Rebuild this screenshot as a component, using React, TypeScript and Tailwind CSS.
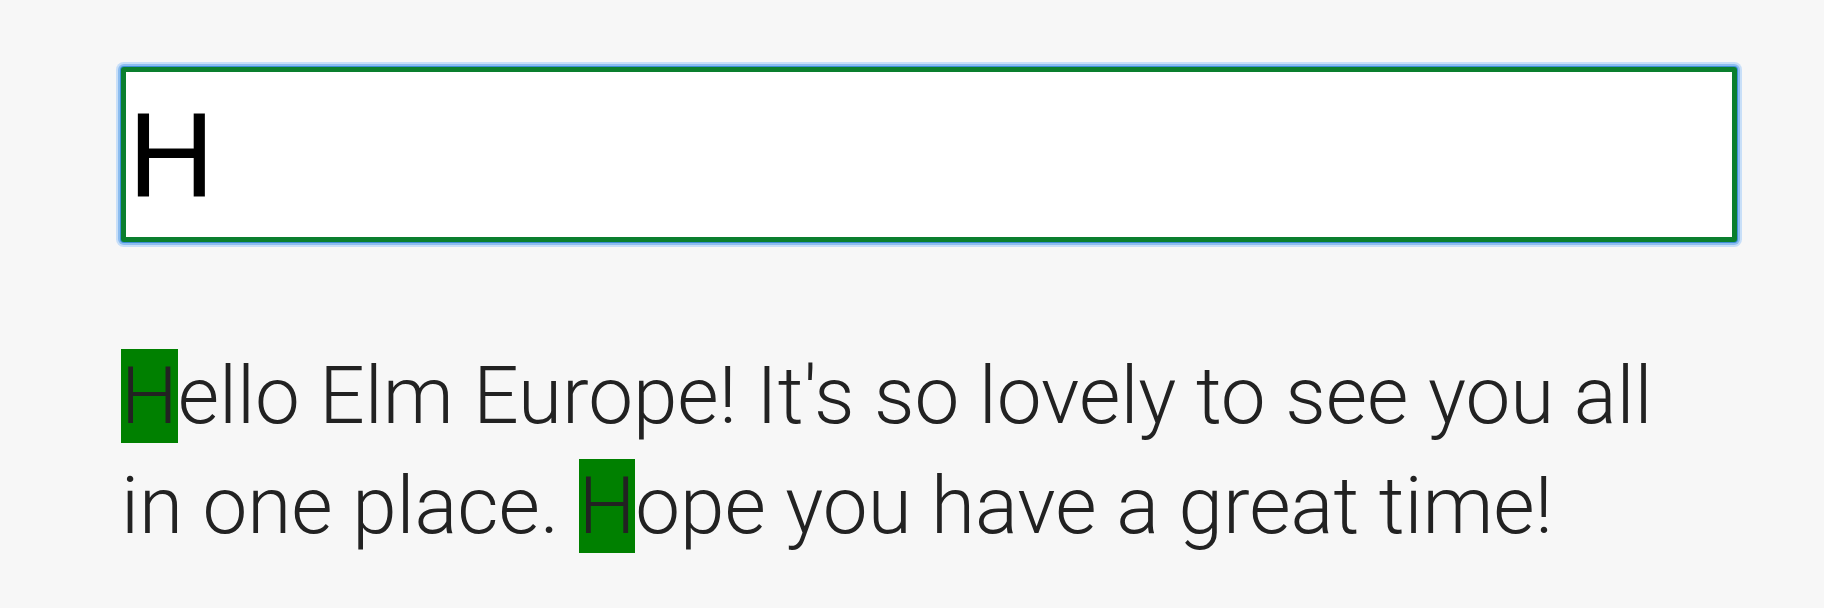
import React from 'react';

export default function App() {
  return (
    <div className="min-h-screen w-full bg-[#f7f7f7] pl-[121px] pr-[87px] pt-[67px]">
      <input
        type="text"
        defaultValue="H"
        className="block h-[175px] w-[1616px] rounded-[3px] border-[5px] border-[#0a7f2e] bg-white p-0 pl-[2px] text-[120px] leading-none text-black shadow-[0_0_0_1px_#3f8fd8,0_0_0_3px_#8dbdf0,0_0_0_5px_#c8dff8] outline-none [font-family:'Liberation_Sans',Arial,sans-serif]"
      />
      <p className="mt-[99px] whitespace-nowrap text-[80px] font-light leading-[110px] text-[#222] [font-family:Roboto,'Liberation_Sans',sans-serif]">
        <span className="bg-[#008000]">H</span>ello Elm Europe! It's so lovely to see you all
        <br />
        in one place. <span className="bg-[#008000]">H</span>ope you have a great time!
      </p>
    </div>
  );
}
